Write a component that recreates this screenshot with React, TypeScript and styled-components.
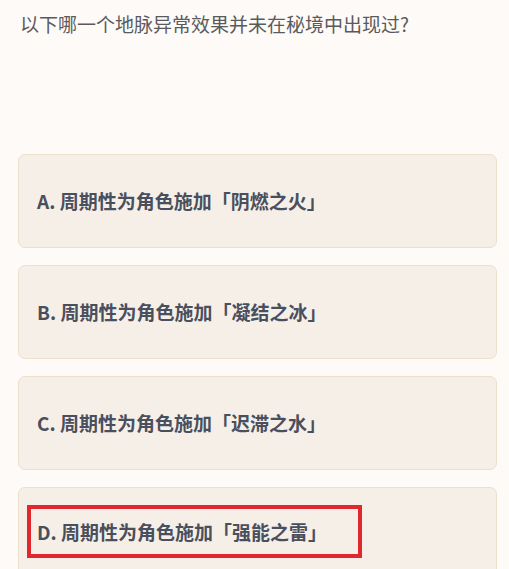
import React from "react";
import styled, { createGlobalStyle } from "styled-components";

const Global = createGlobalStyle`
  html, body { margin: 0; padding: 0; background: #fdfaf8; }
  body { font-family: "Noto Sans CJK SC", "Noto Sans", sans-serif; }
`;

const Page = styled.div`
  width: 509px;
  height: 569px;
  overflow: hidden;
  background: #fdfaf8;
  box-sizing: border-box;
  padding: 10px 12px 0 18px;
`;

const Question = styled.div`
  font-size: 19px;
  line-height: 28px;
  color: #5a5a5c;
  padding-left: 2px;
  margin-bottom: 116px;
`;

const Options = styled.div`
  display: flex;
  flex-direction: column;
  gap: 17px;
`;

const Card = styled.div`
  height: 94px;
  box-sizing: border-box;
  border: 1.5px solid #ecdfcc;
  border-radius: 7px;
  background: #f6efe8;
  display: flex;
  align-items: center;
  padding-left: 8px;
`;

const Label = styled.span<{ $marked?: boolean }>`
  display: inline-block;
  font-size: 19px;
  font-weight: 700;
  color: #4a4f5d;
  padding: 10.5px 31px 10.5px 6px;
  border: 4px solid ${(p) => (p.$marked ? "#e0282e" : "transparent")};
  line-height: 24px;
  margin-bottom: ${(p) => (p.$marked ? "5px" : "0")};
`;

const options = [
  "A. 周期性为角色施加「阴燃之火」",
  "B. 周期性为角色施加「凝结之冰」",
  "C. 周期性为角色施加「迟滞之水」",
  "D. 周期性为角色施加「强能之雷」",
];

export default function App() {
  return (
    <Page>
      <Global />
      <Question>以下哪一个地脉异常效果并未在秘境中出现过?</Question>
      <Options>
        {options.map((o, i) => (
          <Card key={o}>
            <Label $marked={i === 3}>{o}</Label>
          </Card>
        ))}
      </Options>
    </Page>
  );
}
